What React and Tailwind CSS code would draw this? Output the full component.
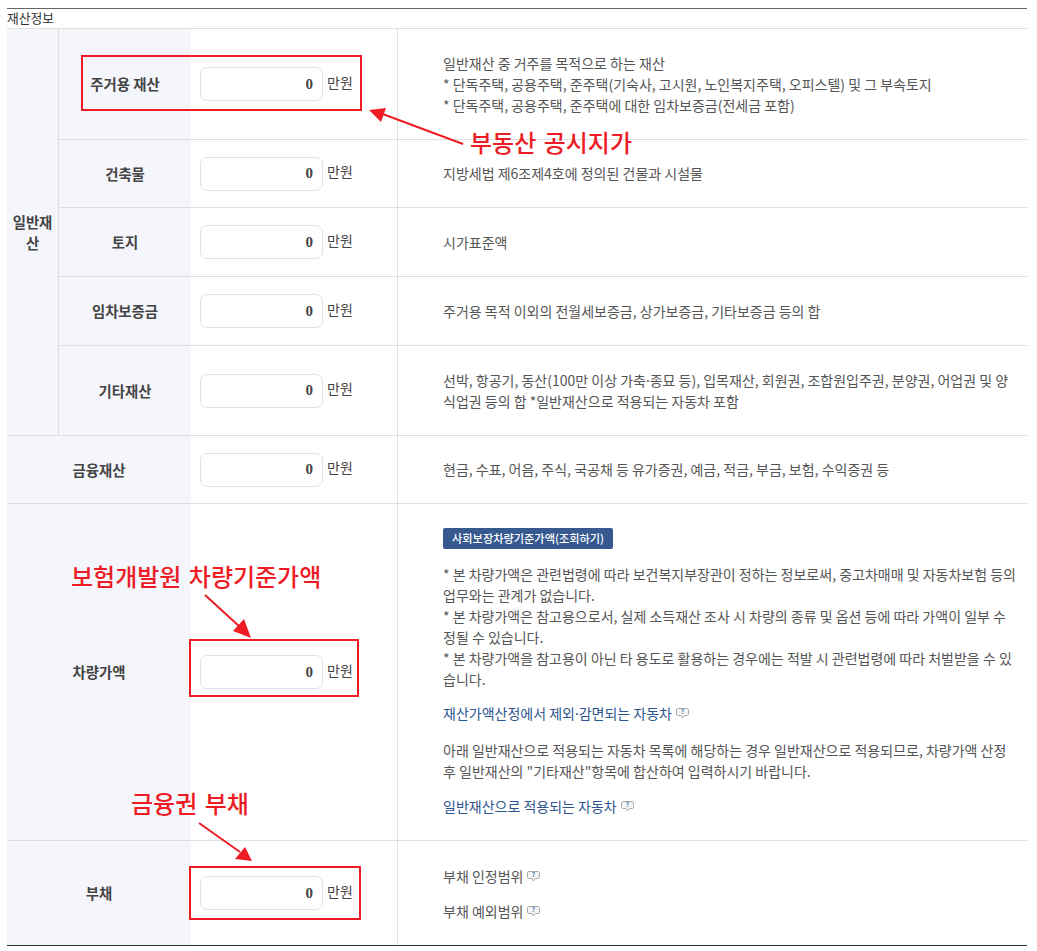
const Amount = () => (
  <div className="flex items-center">
    <div className="w-[123px] h-[34px] border border-[#e2e2e2] rounded-[7px] bg-white flex items-center justify-end pr-[9px] text-[15px] font-bold text-[#444] font-['Liberation_Serif',serif]">
      0
    </div>
    <span className="ml-[4px] -mt-[4px] text-[14px] text-[#444]">만원</span>
  </div>
);

const Help = () => (
  <svg className="inline-block ml-[3px] -mt-[3px]" width="15" height="13" viewBox="0 0 15 13" fill="none">
    <path d="M3 1.500h9c1 0 1.500.6 1.500 1.500v4c0 1-.6 1.500-1.500 1.500H9.500L7.500 11 6 8.500H3C2 8.500 1.500 8 1.500 7V3c0-1 .5-1.500 1.500-1.500z" fill="#f4f4f4" stroke="#aaa" />
    <text x="7.500" y="7.300" fontSize="6.500" fontWeight="700" fill="#4a86c8" textAnchor="middle">?</text>
  </svg>
);

const Dot = () => <span className="font-['Noto_Sans',sans-serif]">·</span>;

const Row = ({ label, h, last, align, children }) => (
  <div className={`flex ${h} ${last ? "" : "border-b border-[#dfdfdf]"}`}>
    <div className="w-[132px] shrink-0 bg-[#f5f6fc] flex items-center justify-center text-[14.4px] font-bold text-[#444]">
      {label}
    </div>
    <div className="w-[207px] shrink-0 border-r border-[#dfdfdf] pl-[9px] flex items-center">
      <Amount />
    </div>
    <div className={`flex-1 pl-[45px] pr-[9.500px] text-[14px] leading-[21px] text-[#555] ${align || "flex flex-col justify-center"}`}>
      {children}
    </div>
  </div>
);

export default function App() {
  return (
    <div className="relative w-[1037px] h-[951px] bg-white pl-[7px] pr-[10px] pt-[8px] font-['Noto_Sans_CJK_KR',sans-serif] overflow-hidden">
      <div className="border-t border-[#666] h-[20px] text-[12.8px] leading-[18px] text-[#333]">재산정보</div>
      <div className="border-t border-[#dfdfdf]">
        <div className="flex border-b border-[#dfdfdf]">
          <div className="w-[52px] shrink-0 bg-[#f5f6fc] border-r border-[#dfdfdf] flex items-center justify-center text-center text-[14.4px] leading-[21px] font-bold text-[#444] px-[4px]">
            일반재산
          </div>
          <div className="flex-1">
            <Row label="주거용 재산" h="h-[111px]">
              <div>
                일반재산 중 거주를 목적으로 하는 재산
                <br />* 단독주택, 공용주택, 준주택(기숙사, 고시원, 노인복지주택, 오피스텔) 및 그 부속토지
                <br />* 단독주택, 공용주택, 준주택에 대한 임차보증금(전세금 포함)
              </div>
            </Row>
            <Row label="건축물" h="h-[68px]">지방세법 제6조제4호에 정의된 건물과 시설물</Row>
            <Row label="토지" h="h-[69px]">시가표준액</Row>
            <Row label="임차보증금" h="h-[69px]">주거용 목적 이외의 전월세보증금, 상가보증금, 기타보증금 등의 합</Row>
            <Row label="기타재산" h="h-[89px]" last>
              <div>
                선박, 항공기, 동산(100만 이상 가축<Dot />종묘 등), 입목재산, 회원권, 조합원입주권, 분양권, 어업권 및 양식업권 등의 합 *일반재산으로 적용되는 자동차 포함
              </div>
            </Row>
          </div>
        </div>
        <div className="[&>div>div:first-child]:w-[184px]">
          <Row label="금융재산" h="h-[68px]">현금, 수표, 어음, 주식, 국공채 등 유가증권, 예금, 적금, 부금, 보험, 수익증권 등</Row>
          <Row label="차량가액" h="h-[337px]" align="pt-[24px]">
            <span className="inline-block h-[21px] px-[9px] rounded-[2px] bg-[#36598f] text-white text-[11.2px] leading-[21px] font-medium align-top">
              사회보장차량기준가액(조회하기)
            </span>
            <p className="mt-[15px]">
              * 본 차량가액은 관련법령에 따라 보건복지부장관이 정하는 정보로써, 중고차매매 및 자동차보험 등의 업무와는 관계가 없습니다.
              <br />* 본 차량가액은 참고용으로서, 실제 소득재산 조사 시 차량의 종류 및 옵션 등에 따라 가액이 일부 수정될 수 있습니다.
              <br />* 본 차량가액을 참고용이 아닌 타 용도로 활용하는 경우에는 적발 시 관련법령에 따라 처벌받을 수 있습니다.
            </p>
            <p className="mt-[13px] text-[#2d5590]">재산가액산정에서 제외<Dot />감면되는 자동차<Help /></p>
            <p className="mt-[16px]">
              아래 일반재산으로 적용되는 자동차 목록에 해당하는 경우 일반재산으로 적용되므로, 차량가액 산정 후 일반재산의 "기타재산"항목에 합산하여 입력하시기 바랍니다.
            </p>
            <p className="mt-[14px] text-[#2d5590]">일반재산으로 적용되는 자동차<Help /></p>
          </Row>
          <Row label="부채" h="h-[104px]" last align="pt-[25px] text-[#2d5590]">
            <p>부채 인정범위<Help /></p>
            <p className="mt-[14px]">부채 예외범위<Help /></p>
          </Row>
        </div>
        <div className="border-t border-[#333]" />
      </div>

      {/* 빨간 표시 */}
      <div className="absolute left-[81px] top-[55px] w-[281px] h-[56px] border-2 border-[#ed1c24]" />
      <div className="absolute left-[189px] top-[639px] w-[170px] h-[58px] border-2 border-[#ed1c24]" />
      <div className="absolute left-[189px] top-[866px] w-[172px] h-[54px] border-2 border-[#ed1c24]" />
      <div className="absolute left-[470px] top-[126px] text-[24px] leading-[32px] text-[#ed1c24] font-medium whitespace-nowrap [word-spacing:2px]">부동산 공시지가</div>
      <div className="absolute left-[71px] top-[560px] text-[24px] leading-[32px] text-[#ed1c24] font-medium whitespace-nowrap [word-spacing:2px]">보험개발원 차량기준가액</div>
      <div className="absolute left-[131px] top-[787px] text-[24px] leading-[32px] text-[#ed1c24] font-medium whitespace-nowrap [word-spacing:2px]">금융권 부채</div>
      <svg className="absolute left-0 top-0" width="1037" height="951" fill="none">
        <line x1="463" y1="144" x2="380" y2="113" stroke="#ed1c24" strokeWidth="2" />
        <polygon points="369,110 386,108 381,122" fill="#ed1c24" />
        <line x1="205" y1="595" x2="240" y2="627" stroke="#ed1c24" strokeWidth="2" />
        <polygon points="251,638 233,631 244,619" fill="#ed1c24" />
        <line x1="199" y1="823" x2="240" y2="852" stroke="#ed1c24" strokeWidth="2" />
        <polygon points="252,861 235,859 245,847" fill="#ed1c24" />
      </svg>
    </div>
  );
}
